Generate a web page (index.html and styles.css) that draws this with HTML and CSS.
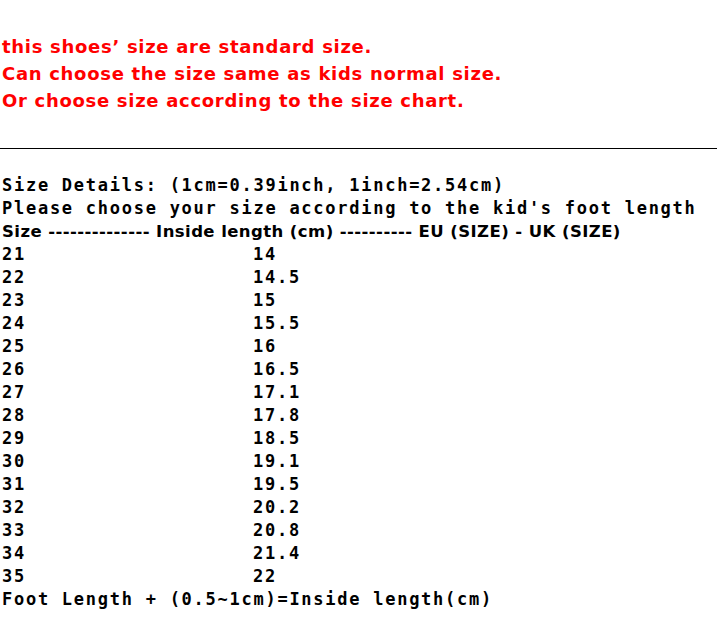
FILE: index.html
```html
<!DOCTYPE html>
<html>
<head>
<meta charset="utf-8">
<link rel="stylesheet" href="styles.css">
</head>
<body>
<div class="notice">
  <p>this shoes’ size are standard size.</p>
  <p>Can choose the size same as kids normal size.</p>
  <p>Or choose size according to the size chart.</p>
</div>
<hr class="rule">
<div class="details">
  <p class="mono">Size Details: (1cm=0.39inch, 1inch=2.54cm)</p>
  <p class="mono">Please choose your size according to the kid's foot length</p>
  <p class="head">Size -------------- Inside length (cm) ---------- EU (SIZE) - UK (SIZE)</p>
  <div class="chart mono">
    <span>21</span><span>14</span>
    <span>22</span><span>14.5</span>
    <span>23</span><span>15</span>
    <span>24</span><span>15.5</span>
    <span>25</span><span>16</span>
    <span>26</span><span>16.5</span>
    <span>27</span><span>17.1</span>
    <span>28</span><span>17.8</span>
    <span>29</span><span>18.5</span>
    <span>30</span><span>19.1</span>
    <span>31</span><span>19.5</span>
    <span>32</span><span>20.2</span>
    <span>33</span><span>20.8</span>
    <span>34</span><span>21.4</span>
    <span>35</span><span>22</span>
  </div>
  <p class="mono">Foot Length + (0.5~1cm)=Inside length(cm)</p>
</div>
</body>
</html>
```
FILE: styles.css
```css
html, body {
  margin: 0;
  padding: 0;
  background: #fff;
}
body {
  padding-left: 2px;
}
p {
  margin: 0;
}
.notice {
  padding-top: 33px;
  color: #ff0000;
  font-family: "DejaVu Sans", sans-serif;
  font-weight: bold;
  font-size: 18px;
  letter-spacing: 0.7px;
  line-height: 27px;
}
.rule {
  margin: 0;
  margin-left: -2px;
  margin-top: 34px;
  border: 0;
  border-top: 1px solid #000;
  height: 0;
}
.details {
  padding-top: 25px;
  color: #000;
}
.mono {
  font-family: "DejaVu Sans Mono", monospace;
  font-weight: bold;
  font-size: 17px;
  letter-spacing: 1.74px;
  line-height: 23px;
}
.head {
  font-family: "DejaVu Sans", sans-serif;
  font-weight: bold;
  font-size: 16.5px;
  letter-spacing: 0.42px;
  line-height: 23px;
}
.chart {
  display: grid;
  grid-template-columns: 251px auto;
}
```
